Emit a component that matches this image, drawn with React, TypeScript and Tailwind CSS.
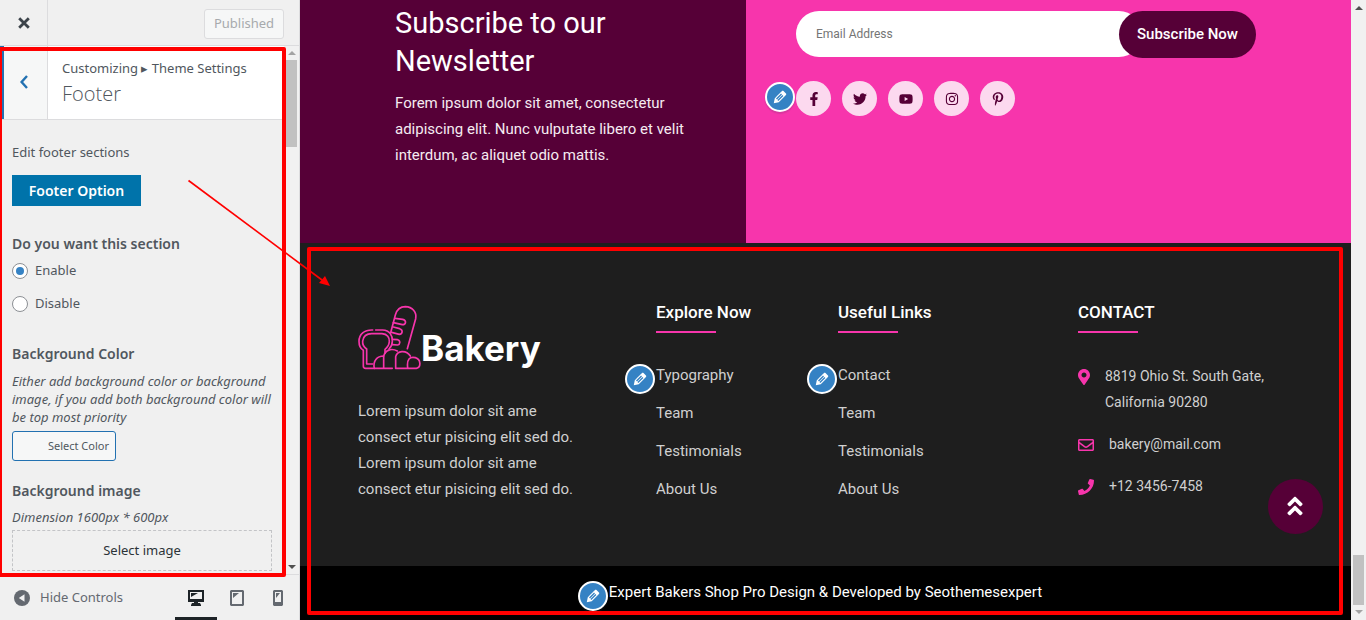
import type { ReactNode } from "react";
import {
  FaAngleDoubleUp,
  FaFacebookF,
  FaInstagram,
  FaMapMarkerAlt,
  FaPhone,
  FaPinterestP,
  FaRegEnvelope,
  FaTwitter,
  FaYoutube,
} from "react-icons/fa";

function EditBadge({ label, className }: { label: string; className: string }) {
  return (
    <button
      type="button"
      aria-label={label}
      className={`absolute flex size-[30px] items-center justify-center rounded-full border-2 border-white bg-[#3582c4] text-white shadow-[0_2px_1px_rgba(46,68,83,0.15)] ${className}`}
    >
      <svg viewBox="0 0 20 20" className="size-[18px]" fill="currentColor" aria-hidden="true">
        <path d="M13.89 3.39l2.71 2.72c.46.46.42 1.24.03 1.64l-8.01 8.02-5.56 1.16 1.16-5.58s7.6-7.63 7.99-8.03c.39-.39 1.22-.39 1.68.07zm-2.73 2.79l-5.59 5.61 1.11 1.11 5.54-5.65zm-2.97 8.23l5.58-5.6-1.07-1.08-5.59 5.6z" />
      </svg>
    </button>
  );
}

function BakeryLogo() {
  return (
    <svg
      viewBox="54 45 189 195"
      className="h-[65px] w-[63px] shrink-0"
      fill="none"
      stroke="#f735ac"
      strokeWidth="5"
      strokeLinecap="round"
      strokeLinejoin="round"
      aria-hidden="true"
    >
      <path d="M152 128L166 75C171 57 182 50 196 50C217 51 231 66 227 86L202 176" />
      <path d="M165 85L188 88C200 91 199 104 187 104L160 98" />
      <path d="M160 111L179 116C190 120 188 132 178 133L155 127" />
      <path d="M158 148L173 149C182 152 181 163 173 165L157 164" />
      <path d="M98 120C73 119 57 133 57 154C57 168 62 177 70 181V229C70 233 73 235 77 235H157" />
      <path d="M107 120H128C149 121 158 136 157 154C157 164 153 171 147 177" />
      <path d="M98 222H80V177C70 170 67 163 68 153C70 139 80 131 95 131H126C142 132 149 143 148 155C147 166 143 172 135 178V190" />
      <path d="M103 235C98 213 111 198 131 198V233" />
      <path d="M131 198C136 181 153 173 172 183" />
      <path d="M167 235V200C171 182 198 178 211 198" />
      <path d="M167 235H229C244 232 243 208 226 203C209 199 200 208 203 233" />
    </svg>
  );
}

function Heading({ children }: { children: ReactNode }) {
  return (
    <h3 className="text-[17px] leading-[26px] font-medium text-white after:mt-1.5 after:block after:h-0.5 after:w-[60px] after:bg-[#f735ac]">
      {children}
    </h3>
  );
}

function LinkColumn({ title, links }: { title: string; links: string[] }) {
  return (
    <div>
      <Heading>{title}</Heading>
      <ul className="relative mt-[23px] text-[15px] leading-[38px]">
        {links.map((l) => (
          <li key={l}>
            <a href="#">{l}</a>
          </li>
        ))}
        <li className="contents">
          <EditBadge label={`Edit ${title} menu`} className="top-2 -left-[31px]" />
        </li>
      </ul>
    </div>
  );
}

const socials = [
  { name: "Facebook", Icon: FaFacebookF },
  { name: "Twitter", Icon: FaTwitter },
  { name: "YouTube", Icon: FaYoutube },
  { name: "Instagram", Icon: FaInstagram },
  { name: "Pinterest", Icon: FaPinterestP },
];

function Sidebar() {
  return (
    <aside className="flex w-[300px] shrink-0 flex-col border-r border-[#dcdcde] bg-[#f0f0f0] font-['Noto_Sans','Open_Sans',sans-serif] text-[13px] text-[#50575e]">
      <header className="flex h-[46px] shrink-0 items-center justify-between border-b border-[#dcdcde] pr-[15px]">
        <button
          type="button"
          aria-label="Close the Customizer"
          className="flex h-full w-12 items-center justify-center border-r border-[#dcdcde] text-[#3c434a]"
        >
          <svg viewBox="0 0 12 12" className="size-3" stroke="currentColor" strokeWidth="2.8" aria-hidden="true">
            <path d="M1.2 1.2L10.8 10.8M10.8 1.2L1.2 10.8" />
          </svg>
        </button>
        <button
          type="button"
          disabled
          className="mt-0.5 h-[30px] w-20 rounded-[3px] border border-[#dcdcde] bg-[#f6f7f7] text-[#a7aaad]"
        >
          Published
        </button>
      </header>

      <div className="flex min-h-0 flex-1">
        <div className="min-w-0 flex-1 overflow-hidden">
          <div className="flex h-[74px] border-b border-[#dcdcde] bg-white">
            <button
              type="button"
              aria-label="Back"
              className="flex w-12 items-center justify-center border-r border-l-4 border-r-[#dcdcde] border-l-[#2271b1] bg-[#f6f7f7] pr-1 pb-0.5 text-[#2271b1]"
            >
              <svg viewBox="0 0 8 14" className="h-3.5 w-2" fill="none" stroke="currentColor" strokeWidth="2.4" aria-hidden="true">
                <path d="M7 1L1.6 7L7 13" />
              </svg>
            </button>
            <div className="pt-3 pl-3.5">
              <p className="leading-5">Customizing ▸ Theme Settings</p>
              <h2 className="font-['Open_Sans','Noto_Sans',sans-serif] text-xl leading-8 font-light">Footer</h2>
            </div>
          </div>

          <div className="px-3 pt-[22px]">
            <p className="leading-5">Edit footer sections</p>
            <h3 className="mt-[13px] flex h-[31px] w-[129px] items-center justify-center bg-[#0073aa] text-sm font-semibold text-white">
              Footer Option
            </h3>

            <fieldset className="mt-7">
              <legend className="text-sm leading-5 font-semibold">Do you want this section</legend>
              {["Enable", "Disable"].map((o) => (
                <label key={o} className="mt-2 flex h-[25px] items-center gap-[7px] first-of-type:mt-1">
                  <input
                    type="radio"
                    name="section"
                    defaultChecked={o === "Enable"}
                    className="flex size-4 appearance-none items-center justify-center rounded-full border border-[#8c8f94] bg-white checked:before:size-2 checked:before:rounded-full checked:before:bg-[#3582c4]"
                  />
                  {o}
                </label>
              ))}
            </fieldset>

            <h3 className="mt-7 text-sm leading-5 font-semibold">Background Color</h3>
            <p className="-mr-2 mt-2 max-w-[264px] leading-[18px] italic">
              Either add background color or background image, if you add both background color will be top most priority
            </p>
            <button
              type="button"
              className="mt-[5px] block h-[30px] w-[104px] rounded-[3px] border border-[#2271b1] bg-[#f6f7f7] pr-1.5 text-right text-[11px]"
            >
              Select Color
            </button>

            <h3 className="mt-5 text-sm leading-5 font-semibold">Background image</h3>
            <p className="mt-[7px] leading-[18px] italic">Dimension 1600px * 600px</p>
            <button
              type="button"
              className="mt-1 block h-[41px] w-full border border-dashed border-[#c3c4c7] text-[#2c3338]"
            >
              Select image
            </button>
          </div>
        </div>

        <div className="flex w-[15px] shrink-0 flex-col items-center bg-[#f1f1f1] py-[5px]" aria-hidden="true">
          <svg viewBox="0 0 8 4" className="h-1 w-2" fill="#a3a3a3">
            <path d="M0 4L4 0L8 4Z" />
          </svg>
          <div className="mt-[5px] h-[87px] w-[11px] bg-[#c1c1c1]" />
          <svg viewBox="0 0 8 4" className="mt-auto h-1 w-2" fill="#505050">
            <path d="M0 0L4 4L8 0Z" />
          </svg>
        </div>
      </div>

      <footer className="flex h-[46px] shrink-0 items-stretch justify-between border-t border-[#dcdcde] pl-3.5 text-[#646970]">
        <button type="button" className="flex items-center gap-2.5">
          <svg viewBox="0 0 16 16" className="size-4" aria-hidden="true">
            <circle cx="8" cy="8" r="8" fill="#646970" />
            <path d="M10.5 4.2V11.8L4.8 8Z" fill="#f0f0f1" />
          </svg>
          Hide Controls
        </button>
        <div className="flex">
          <button
            type="button"
            aria-label="Desktop preview"
            className="flex w-[42px] items-center justify-center border-b-[3px] border-[#1d2327] pt-1 text-[#1d2327]"
          >
            <svg viewBox="0 0 16 16" className="size-4" fill="currentColor" aria-hidden="true">
              <path fillRule="evenodd" d="M0 0H16V12H10V13H12L13 15V16H3V15L4 13H6V12H0ZM2 2V9H14V2ZM3 3H10L3 7Z" />
            </svg>
          </button>
          <button
            type="button"
            aria-label="Tablet preview"
            className="flex w-10 items-center justify-center border-b-[3px] border-transparent pt-1"
          >
            <svg viewBox="0 0 14 16" className="h-4 w-3.5" fill="currentColor" aria-hidden="true">
              <path fillRule="evenodd" d="M1 0H13L14 1V15L13 16H1L0 15V1ZM2 2V14H12V2ZM3 3H9L3 8Z" />
            </svg>
          </button>
          <button
            type="button"
            aria-label="Mobile preview"
            className="flex w-[42px] items-center justify-center border-b-[3px] border-transparent pt-1"
          >
            <svg viewBox="0 0 10 16" className="h-4 w-2.5" fill="currentColor" aria-hidden="true">
              <path fillRule="evenodd" d="M1 0H9L10 1V15L9 16H1L0 15V1ZM2 2V12H8V2ZM3 3H7L3 8Z" />
            </svg>
          </button>
        </div>
      </footer>
    </aside>
  );
}

function Preview() {
  return (
    <div className="flex min-w-0 flex-1 flex-col font-[Roboto,sans-serif]">
      <section className="grid h-[243px] shrink-0 grid-cols-[446fr_605fr]">
        <div className="bg-[#560037] pt-1 pr-10 pl-[95px] text-white">
          <h2 className="max-w-[240px] text-[29px] leading-[38px]">Subscribe to our Newsletter</h2>
          <p className="mt-2.5 max-w-[300px] text-[15px] leading-[26px] text-[#f5ebf1]">
            Forem ipsum dolor sit amet, consectetur adipiscing elit. Nunc vulputate libero et velit interdum, ac aliquet
            odio mattis.
          </p>
        </div>
        <div className="bg-[#f735ac] pt-[11px] pl-[50px]">
          <form className="flex max-w-[460px]" onSubmit={(e) => e.preventDefault()}>
            <input
              type="email"
              aria-label="Email Address"
              placeholder="Email Address"
              className="-mr-[23px] h-[46px] min-w-0 flex-1 rounded-full bg-white px-5 text-xs text-[#333] placeholder:text-[#757575]"
            />
            <button
              type="submit"
              className="relative h-[47px] w-[137px] rounded-full bg-[#560037] text-[15px] font-medium text-white"
            >
              Subscribe Now
            </button>
          </form>
          <div className="relative mt-[23px] flex gap-[11px]">
            {socials.map(({ name, Icon }) => (
              <a
                key={name}
                href="#"
                aria-label={name}
                className="flex size-[35px] items-center justify-center rounded-full bg-[#fcd9ef] text-sm text-[#560037]"
              >
                <Icon />
              </a>
            ))}
            <EditBadge label="Edit social links" className="top-px -left-[31px]" />
          </div>
        </div>
      </section>

      <footer className="flex flex-1 flex-col bg-[#1e1e1e] text-[#d0d0d0]">
        <div className="grid flex-1 grid-cols-[298fr_182fr_240fr_213fr] pt-14 pr-[60px] pl-[58px]">
          <div className="pt-1.5">
            <a href="#" className="flex items-center">
              <BakeryLogo />
              <span className="pt-5 font-[Inter,sans-serif] text-[35px] leading-10 font-bold text-white">Bakery</span>
            </a>
            <p className="mt-7 max-w-[225px] text-[15px] leading-[26px]">
              Lorem ipsum dolor sit ame consect etur pisicing elit sed do. Lorem ipsum dolor sit ame consect etur
              pisicing elit sed do.
            </p>
          </div>
          <LinkColumn title="Explore Now" links={["Typography", "Team", "Testimonials", "About Us"]} />
          <LinkColumn title="Useful Links" links={["Contact", "Team", "Testimonials", "About Us"]} />
          <div>
            <Heading>CONTACT</Heading>
            <address className="mt-[30px] flex flex-col gap-4 text-sm leading-[26px] not-italic">
              <p className="flex gap-[15px]">
                <FaMapMarkerAlt className="mt-1.5 h-4 w-3 shrink-0 text-[#f735ac]" />
                <span className="max-w-[170px]">8819 Ohio St. South Gate, California 90280</span>
              </p>
              <p className="flex items-center gap-[15px]">
                <FaRegEnvelope className="mt-0.5 size-4 shrink-0 text-[#f735ac]" />
                bakery@mail.com
              </p>
              <p className="flex items-center gap-[15px]">
                <FaPhone className="mt-0.5 size-4 shrink-0 text-[#f735ac]" />
                +12 3456-7458
              </p>
            </address>
          </div>
        </div>
        <div className="flex h-[54px] items-center justify-center bg-black pb-0.5 text-[15px] text-white">
          <p className="relative">
            Expert Bakers Shop Pro Design &amp; Developed by Seothemesexpert
            <EditBadge label="Edit copyright text" className="top-0 -left-[31px]" />
          </p>
        </div>
      </footer>
    </div>
  );
}

export default function App() {
  return (
    <div className="relative flex h-screen min-h-[620px] overflow-hidden">
      <Sidebar />
      <main className="relative flex min-w-0 flex-1">
        <Preview />
        <div className="flex w-[15px] shrink-0 flex-col items-center bg-[#f1f1f1] py-1.5" aria-hidden="true">
          <svg viewBox="0 0 8 4" className="h-1 w-2" fill="#505050">
            <path d="M0 4L4 0L8 4Z" />
          </svg>
          <div className="mt-auto mb-[5px] h-[50px] w-[11px] bg-[#c1c1c1]" />
          <svg viewBox="0 0 8 4" className="h-1 w-2" fill="#a3a3a3">
            <path d="M0 0L4 4L8 0Z" />
          </svg>
        </div>
        <button
          type="button"
          aria-label="Back to top"
          className="absolute right-[43px] bottom-[86px] flex size-[55px] items-center justify-center rounded-full bg-[#560037] pr-px pb-0.5 text-2xl text-white"
        >
          <FaAngleDoubleUp />
        </button>
        <div className="pointer-events-none absolute top-[247px] right-[23px] bottom-[5px] left-[7px] rounded-[2px] border-4 border-[#ff0000]" />
      </main>
      <div className="pointer-events-none absolute top-[47px] bottom-[43px] left-0 w-[286px] rounded-r-[2px] border-4 border-l-2 border-[#ff0000]" />
      <svg
        viewBox="0 0 144 108"
        className="pointer-events-none absolute top-[179px] left-[187px] h-[108px] w-36"
        aria-hidden="true"
      >
        <path d="M1.5 1.5L135 101" stroke="#ff0000" strokeWidth="1.6" />
        <path d="M143 107L132 104L138 97Z" fill="#ff0000" />
      </svg>
    </div>
  );
}
